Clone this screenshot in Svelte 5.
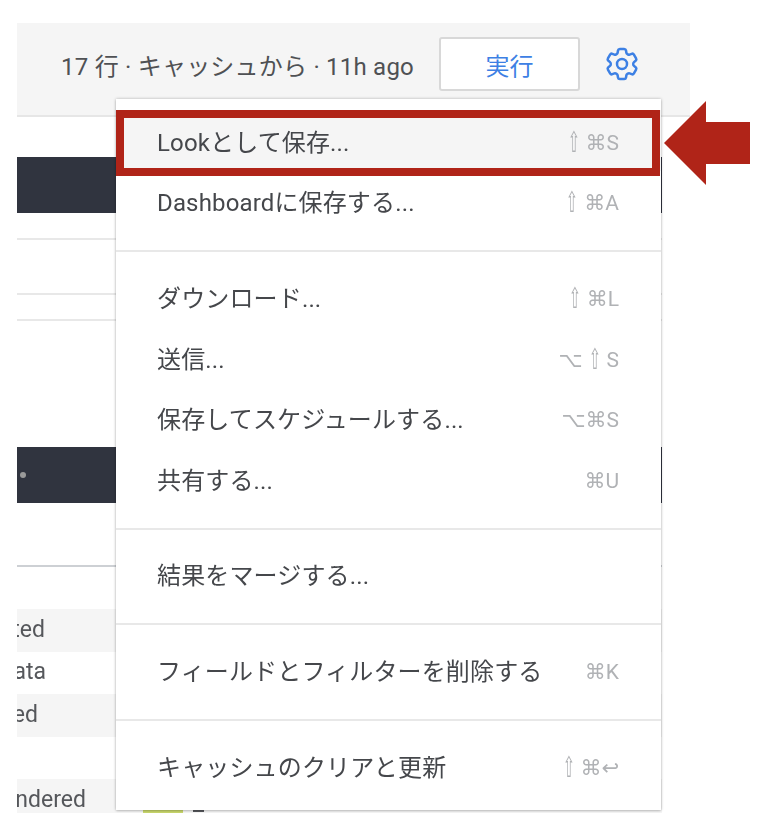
<script>
  // menu groups, each item: label + shortcut
  const groups = [
    [
      { label: 'Lookとして保存...', keys: '⇧ ⌘S' },
      { label: 'Dashboardに保存する...', keys: '⇧ ⌘A' }
    ],
    [
      { label: 'ダウンロード...', keys: '⇧ ⌘L' },
      { label: '送信...', keys: '⌥ ⇧ S' },
      { label: '保存してスケジュールする...', keys: '⌥⌘S' },
      { label: '共有する...', keys: '⌘U' }
    ],
    [{ label: '結果をマージする...', keys: '' }],
    [{ label: 'フィールドとフィルターを削除する', keys: '⌘K' }],
    [{ label: 'キャッシュのクリアと更新', keys: '⇧ ⌘↩' }]
  ];

  // rows behind the menu, only the tail of each name shows
  const rows = [
    { name: 'Completed', end: 28, shaded: true },
    { name: 'No Data', end: 29, shaded: false },
    { name: 'Closed', end: 21, shaded: true },
    { name: '', end: 0, shaded: false },
    { name: 'Rendered', end: 69, shaded: true, bar: true }
  ];
</script>

<div class="stage">
  <div class="shot">
    <div class="page">
      <header class="bar">
        <span class="status">17 行 · キャッシュから · 11h ago</span>
        <button class="run">実行</button>
        <svg class="gear" viewBox="0 0 24 24" fill="none" stroke="#3d80e4" stroke-width="1.5">
          <path d="M9.594 3.94c.09-.542.56-.94 1.11-.94h2.593c.55 0 1.02.398 1.11.94l.213 1.281c.063.374.313.686.645.87.074.04.147.083.22.127.325.196.72.257 1.075.124l1.217-.456a1.125 1.125 0 0 1 1.37.49l1.296 2.247a1.125 1.125 0 0 1-.26 1.431l-1.003.827c-.293.241-.438.613-.43.992a7.723 7.723 0 0 1 0 .255c-.008.378.137.75.43.991l1.004.827c.424.35.534.955.26 1.43l-1.298 2.247a1.125 1.125 0 0 1-1.369.491l-1.217-.456c-.355-.133-.75-.072-1.076.124a6.47 6.47 0 0 1-.22.128c-.331.183-.581.495-.644.869l-.213 1.281c-.09.543-.56.94-1.11.94h-2.594c-.55 0-1.019-.398-1.11-.94l-.213-1.281c-.062-.374-.312-.686-.644-.87a6.52 6.52 0 0 1-.22-.127c-.325-.196-.72-.257-1.076-.124l-1.217.456a1.125 1.125 0 0 1-1.369-.49l-1.297-2.247a1.125 1.125 0 0 1 .26-1.431l1.004-.827c.292-.24.437-.613.43-.991a6.932 6.932 0 0 1 0-.255c.007-.38-.138-.751-.43-.992l-1.004-.827a1.125 1.125 0 0 1-.26-1.43l1.297-2.247a1.125 1.125 0 0 1 1.37-.491l1.216.456c.356.133.751.072 1.076-.124.072-.044.146-.086.22-.128.332-.183.582-.495.644-.869l.214-1.28Z" />
          <circle cx="12" cy="12" r="3" />
        </svg>
      </header>

      <div class="content">
        <div class="band first"></div>
        <div class="line l1"></div>
        <div class="line l2"></div>
        <div class="line l3"></div>
        <div class="band second"><span class="dot"></span></div>
        <div class="line l4"></div>
        <div class="rows">
          {#each rows as r}
            <div class="row" class:shaded={r.shaded}>
              <span class="name" style="width: {r.end}px">{r.name}</span>
              {#if r.bar}
                <span class="swatch"></span>
                <span class="tick"></span>
              {/if}
            </div>
          {/each}
        </div>
      </div>
    </div>

    <div class="menu">
      {#each groups as group, i}
        {#if i > 0}<hr />{/if}
        <ul>
          {#each group as item, j}
            <li class:active={i === 0 && j === 0}>
              <span>{item.label}</span>
              <span class="keys">
                {#each item.keys as ch}
                  {#if ch === '⇧'}<span class="shift">{ch}</span>{:else}{ch}{/if}
                {/each}
              </span>
            </li>
          {/each}
        </ul>
      {/each}
    </div>
  </div>

  <div class="callout"></div>
  <svg class="arrow" viewBox="0 0 86 84">
    <polygon points="0,42 42,0 42,21 86,21 86,63 42,63 42,84" fill="#b02418" />
  </svg>
</div>

<style>
  :global(body) {
    background: #fff;
  }

  .stage {
    position: relative;
    width: 770px;
    height: 830px;
    overflow: hidden;
    font-family: Roboto, "Noto Sans CJK JP", sans-serif;
    color: #45474b;
  }

  .shot {
    position: relative;
    height: 830px;
    padding: 23px 0 0 17px;
    box-sizing: border-box;
    filter: blur(0.6px);
  }

  .page {
    width: 673px;
  }

  .bar {
    display: flex;
    align-items: center;
    justify-content: flex-end;
    height: 94px;
    padding: 0 52px 10px 0;
    box-sizing: border-box;
    background: #f5f5f5;
    border-bottom: 2px solid #e6e6e6;
  }

  .status {
    font-size: 24px;
    letter-spacing: 0.22px;
    margin-right: 25px;
    color: #4f5154;
  }

  .run {
    width: 141px;
    height: 54px;
    margin-right: 22px;
    background: #fff;
    border: 2px solid #d8d8d8;
    border-radius: 3px;
    color: #3d80e4;
    font: inherit;
    font-size: 24px;
  }

  .gear {
    width: 40px;
    height: 40px;
    margin-right: -4px;
  }

  .content {
    width: 645px;
  }

  .band {
    height: 56px;
    background: #30343f;
  }

  .band.first {
    margin-top: 40px;
  }

  .band.second {
    margin-top: 126px;
    display: flex;
    align-items: center;
  }

  .dot {
    width: 6px;
    height: 6px;
    margin-left: 3px;
    border-radius: 50%;
    background: #9a9a9a;
  }

  .line {
    height: 2px;
    background: #e8e8e8;
  }

  .l1 { margin-top: 25px; }
  .l2 { margin-top: 53px; }
  .l3 { margin-top: 24px; }
  .l4 { margin-top: 62px; background: #cdd0d4; }

  .rows {
    margin-top: 42px;
  }

  .row {
    height: 42.5px;
    padding-bottom: 2px;
    box-sizing: border-box;
    display: flex;
    align-items: center;
    font-size: 23px;
    color: #55575b;
  }

  .row:last-child {
    height: 34px;
    align-items: flex-start;
    padding: 7px 0 0;
  }

  .row.shaded {
    background: #f5f5f5;
  }

  .name {
    display: flex;
    justify-content: flex-end;
    overflow: hidden;
    white-space: nowrap;
  }

  .swatch {
    align-self: flex-end;
    width: 40px;
    height: 4px;
    margin-left: 57px;
    background: #c8d66b;
  }

  .tick {
    align-self: flex-end;
    width: 11px;
    height: 2px;
    margin: 0 0 1px 10px;
    background: #55575b;
  }

  .menu {
    position: absolute;
    left: 116px;
    top: 99px;
    width: 545px;
    height: 711px;
    padding-top: 11px;
    box-sizing: border-box;
    background: #fff;
    box-shadow: 0 0 3px rgba(0, 0, 0, 0.28), 0 1px 2px rgba(0, 0, 0, 0.12);
    font-size: 24px;
    letter-spacing: 0.15px;
  }

  ul {
    list-style: none;
    margin: 0;
    padding: 0;
  }

  li {
    display: flex;
    align-items: center;
    justify-content: space-between;
    height: 60.6px;
    padding: 0 42px 0 41px;
  }

  li.active {
    background: #f5f5f5;
  }

  .keys {
    margin-top: 5px;
    font-family: Roboto, "DejaVu Sans", sans-serif;
    font-size: 21px;
    letter-spacing: 0;
    color: #b0b2b5;
    white-space: pre;
  }

  .shift {
    display: inline-block;
    font-family: "DejaVu Sans", sans-serif;
    transform: scale(0.7, 1.35);
    margin: 0 -2px;
  }

  hr {
    height: 2px;
    margin: 19px 0 14px;
    border: 0;
    background: #e8e8e8;
  }

  .callout {
    position: absolute;
    left: 116px;
    top: 110px;
    width: 544px;
    height: 66px;
    box-sizing: border-box;
    border: 8px solid #b02418;
  }

  .arrow {
    position: absolute;
    left: 664px;
    top: 101px;
    width: 86px;
    height: 84px;
  }
</style>
